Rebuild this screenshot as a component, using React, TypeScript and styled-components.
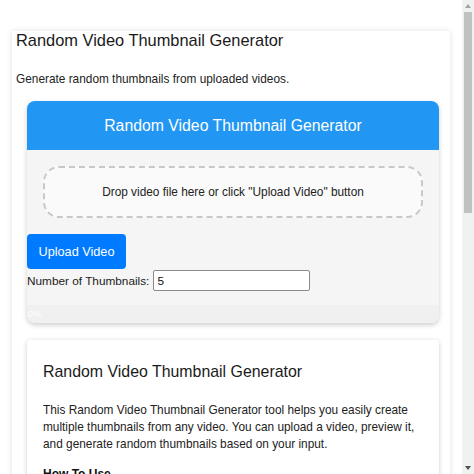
import styled, { createGlobalStyle } from 'styled-components'

const GlobalStyle = createGlobalStyle`
	html, body {
		margin: 0;
		background: #fff;
	}
	body {
		font-family: "Liberation Sans", Arial, Helvetica, sans-serif;
		color: #222;
	}
`

const steps = [
	'Drop a video file into the box or click "Upload Video".',
	'Set how many thumbnails you want to generate.',
	'Preview the video to check it is the right one.',
	'Click "Generate Thumbnails" and wait for the progress bar.',
	'Download the thumbnails you like.',
]

const features = [
	'Works entirely in your browser, no upload to a server',
	'Picks random frames from anywhere in the video',
	'Choose any number of thumbnails',
]

const App = () => {
	return (
		<Shell>
			<GlobalStyle />
			<Main>
				<Container>
					<Title>Random Video Thumbnail Generator</Title>
					<Lead>Generate random thumbnails from uploaded videos.</Lead>

					<ToolCard>
						<ToolHeader>Random Video Thumbnail Generator</ToolHeader>
						<DropZone>Drop video file here or click "Upload Video" button</DropZone>
						<UploadButton>Upload Video</UploadButton>
						<CountRow>
							<CountLabel htmlFor="thumb-count">Number of Thumbnails:</CountLabel>
							<CountInput id="thumb-count" type="number" defaultValue={5} />
						</CountRow>
						<Progress>
							<ProgressText>0%</ProgressText>
						</Progress>
					</ToolCard>

					<InfoCard>
						<InfoTitle>Random Video Thumbnail Generator</InfoTitle>
						<InfoText>
							This Random Video Thumbnail Generator tool helps you easily create multiple
							thumbnails from any video. You can upload a video, preview it, and generate
							random thumbnails based on your input.
						</InfoText>
						<InfoSubtitle>How To Use</InfoSubtitle>
						<List as="ol">
							{steps.map(step => (
								<li key={step}>{step}</li>
							))}
						</List>
						<InfoSubtitle>Key Features</InfoSubtitle>
						<List>
							{features.map(feature => (
								<li key={feature}>{feature}</li>
							))}
						</List>
					</InfoCard>
				</Container>
			</Main>
			<ScrollRail>
				<RailArrow dir="up" />
				<RailTrack>
					<RailThumb />
				</RailTrack>
				<RailArrow dir="down" />
			</ScrollRail>
		</Shell>
	)
}

const Shell = styled.div`
	display: flex;
	height: 100vh;
	overflow: hidden;
`

const Main = styled.main`
	flex: 1;
	min-width: 0;
	overflow: hidden;
	padding: 16px 12px 24px;
`

const ScrollRail = styled.div`
	width: 12px;
	flex-shrink: 0;
	display: flex;
	flex-direction: column;
	background: #f1f1f1;
`

const RailArrow = styled.div<{ dir: 'up' | 'down' }>`
	height: 12px;
	display: flex;
	align-items: center;
	justify-content: center;

	&::after {
		content: '';
		border-left: 3px solid transparent;
		border-right: 3px solid transparent;
		${props =>
			props.dir === 'up'
				? 'border-bottom: 4px solid #a3a3a3;'
				: 'border-top: 4px solid #505050;'}
	}
`

const RailTrack = styled.div`
	flex: 1;
	padding: 0 2px;
`

const RailThumb = styled.div`
	height: 201px;
	background: #c1c1c1;
`

const Container = styled.div`
	background: #fff;
	padding: 0 0 24px 4px;
	box-shadow: 0 0 6px rgba(0, 0, 0, 0.12);
`

const Title = styled.h1`
	margin: 15px 0 0;
	font-size: 16.4px;
	line-height: 19px;
	font-weight: normal;
	color: #1a1a1a;
`

const Lead = styled.p`
	margin: 22px 0 0;
	font-size: 11.85px;
	line-height: 14px;
	color: #222;
`

const ToolCard = styled.section`
	margin: 15px 11px 0;
	background: #f5f5f5;
	border-radius: 8px;
	overflow: hidden;
	box-shadow: 0 2px 5px rgba(0, 0, 0, 0.2);
`

const ToolHeader = styled.h2`
	margin: 0;
	height: 49px;
	display: flex;
	align-items: center;
	justify-content: center;
	background: #2196f3;
	color: #fff;
	font-size: 15.8px;
	font-weight: normal;
`

const DropZone = styled.div`
	margin: 16px;
	padding: 17px 10px;
	border: 2px dashed #c8c8c8;
	border-radius: 16px;
	background: #fafafa;
	text-align: center;
	font-size: 11.85px;
	line-height: 14px;
	color: #222;
`

const UploadButton = styled.button`
	display: block;
	height: 35px;
	padding: 0 11.5px;
	border: none;
	border-radius: 4px;
	background: #007bff;
	color: #fff;
	font-family: inherit;
	font-size: 12.7px;
	cursor: pointer;
`

const CountRow = styled.div`
	display: flex;
	align-items: center;
	gap: 4px;
	margin-top: 1px;
`

const CountLabel = styled.label`
	font-size: 11.8px;
	color: #222;
`

const CountInput = styled.input`
	box-sizing: border-box;
	width: 157px;
	height: 21px;
	padding: 0 3px;
	border: 1px solid #8a8a8a;
	border-radius: 2px;
	background: #fff;
	font-family: inherit;
	font-size: 11.8px;
	color: #111;
	-moz-appearance: textfield;

	&::-webkit-inner-spin-button,
	&::-webkit-outer-spin-button {
		-webkit-appearance: none;
		margin: 0;
	}
`

const Progress = styled.div`
	margin-top: 14px;
	height: 18px;
	background: #f0f0f0;
	display: flex;
	align-items: center;
`

const ProgressText = styled.span`
	padding-left: 1px;
	font-size: 9px;
	color: #fff;
`

const InfoCard = styled.section`
	margin: 17px 11px 0;
	padding: 22px 16px 16px;
	background: #fff;
	border-radius: 4px;
	box-shadow: 0 1px 5px rgba(0, 0, 0, 0.2);
`

const InfoTitle = styled.h2`
	margin: 0;
	font-size: 15.9px;
	line-height: 19px;
	font-weight: normal;
	color: #1a1a1a;
`

const InfoText = styled.p`
	margin: 20.5px 0 0;
	font-size: 11.85px;
	line-height: 17px;
	color: #222;
`

const InfoSubtitle = styled.h3`
	margin: 13px 0 0;
	font-size: 12px;
	line-height: 16px;
	font-weight: bold;
	color: #111;
`

const List = styled.ul`
	margin: 8px 0 0;
	padding-left: 22px;
	font-size: 11.85px;
	line-height: 17px;
	color: #222;

	li {
		margin-bottom: 4px;
	}
`

export default App
